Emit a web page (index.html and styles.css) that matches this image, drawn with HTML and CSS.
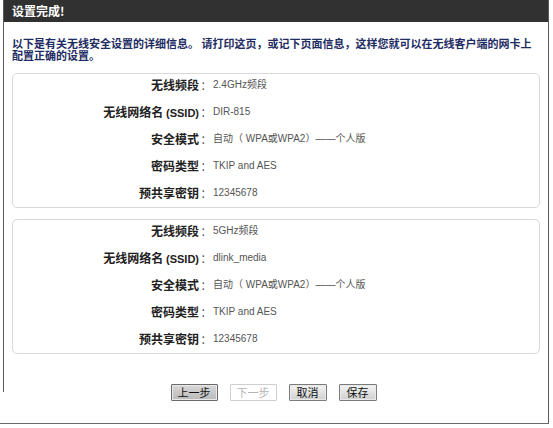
FILE: index.html
```
<!DOCTYPE html>
<html lang="zh-CN">
<head>
<meta charset="utf-8">
<title>设置完成</title>
<link rel="stylesheet" href="styles.css">
</head>
<body>
<div class="page">
  <div class="frame">
    <div class="header">设置完成!</div>
    <p class="intro">以下是有关无线安全设置的详细信息。 请打印这页，或记下页面信息，这样您就可以在无线客户端的网卡上<br>配置正确的设置。</p>

    <div class="panel">
      <div class="row"><span class="lbl">无线频段</span><span class="colon">：</span><span class="val">2.4GHz频段</span></div>
      <div class="row"><span class="lbl">无线网络名 <span class="lat">(SSID)</span></span><span class="colon">：</span><span class="val">DIR-815</span></div>
      <div class="row"><span class="lbl">安全模式</span><span class="colon">：</span><span class="val">自动（ WPA或WPA2）——个人版</span></div>
      <div class="row"><span class="lbl">密码类型</span><span class="colon">：</span><span class="val">TKIP and AES</span></div>
      <div class="row"><span class="lbl">预共享密钥</span><span class="colon">：</span><span class="val">12345678</span></div>
    </div>

    <div class="panel">
      <div class="row"><span class="lbl">无线频段</span><span class="colon">：</span><span class="val">5GHz频段</span></div>
      <div class="row"><span class="lbl">无线网络名 <span class="lat">(SSID)</span></span><span class="colon">：</span><span class="val">dlink_media</span></div>
      <div class="row"><span class="lbl">安全模式</span><span class="colon">：</span><span class="val">自动（ WPA或WPA2）——个人版</span></div>
      <div class="row"><span class="lbl">密码类型</span><span class="colon">：</span><span class="val">TKIP and AES</span></div>
      <div class="row"><span class="lbl">预共享密钥</span><span class="colon">：</span><span class="val">12345678</span></div>
    </div>

    <div class="buttons">
      <button class="btn btn-focus">上一步</button>
      <button class="btn btn-disabled" disabled>下一步</button>
      <button class="btn btn-short">取消</button>
      <button class="btn btn-short">保存</button>
    </div>
  </div>
</div>
</body>
</html>
```

FILE: styles.css
```
html, body {
  margin: 0;
  padding: 0;
  background: #ffffff;
}

body {
  font-family: "Noto Sans CJK SC", "Liberation Sans", sans-serif;
}

.page {
  width: 549px;
  border-bottom: 1px solid #6a6a6a;
}

.frame {
  position: relative;
  box-sizing: border-box;
  margin-left: 3px;
  width: 546px;
  height: 423px;
  border-right: 1px solid #5a5a5a;
  display: flex;
  flex-direction: column;
}

.frame::before {
  content: "";
  position: absolute;
  left: 0;
  top: 0;
  width: 1px;
  height: 392px;
  background: #5a5a5a;
}

.header {
  height: 22px;
  line-height: 22px;
  background: #313131;
  color: #ffffff;
  font-size: 12px;
  font-weight: bold;
  padding-left: 9px;
}

.intro {
  margin: 15px 8px 0 9px;
  font-size: 11px;
  line-height: 12px;
  font-weight: bold;
  color: #1e2c63;
}

.panel {
  margin: 12px 8px 0 9px;
  border: 1px solid #d9d9d9;
  border-radius: 5px;
  padding: 3px 0 6px 0;
  display: flex;
  flex-direction: column;
  gap: 11px;
}

.panel + .panel {
  margin-top: 11px;
}

.row {
  display: flex;
  height: 16px;
  line-height: 16px;
  align-items: center;
}

.lbl {
  width: 186px;
  text-align: right;
  font-size: 12px;
  font-weight: bold;
  color: #222222;
}

.lat {
  font-family: "Liberation Sans", sans-serif;
  font-size: 11px;
}

.colon {
  width: 14px;
  text-align: center;
  font-size: 11px;
  color: #555555;
}

.val {
  font-family: "Liberation Sans", "Noto Sans CJK SC", sans-serif;
  font-size: 10px;
  color: #555555;
}

.buttons {
  margin-top: 30px;
  display: flex;
  justify-content: center;
  gap: 12px;
  padding-right: 4px;
}

.btn {
  box-sizing: border-box;
  height: 17px;
  width: 47px;
  padding: 0;
  font-family: "Noto Sans CJK SC", sans-serif;
  font-size: 11px;
  line-height: 15px;
  color: #111111;
  border: 1px solid #7b7b7b;
  border-radius: 1px;
  background: linear-gradient(#f4f4f4, #cfcfcf);
  box-shadow: inset 0 0 0 1px #e9e9e9;
}

.btn-focus {
  background: linear-gradient(#d8d8d8, #b9b9b9);
  border-color: #6a6a6a;
}

.btn-disabled {
  background: #ffffff;
  border-color: #cfcfcf;
  color: #b5b5b5;
  box-shadow: none;
}

.btn-short {
  width: 38px;
}
```
